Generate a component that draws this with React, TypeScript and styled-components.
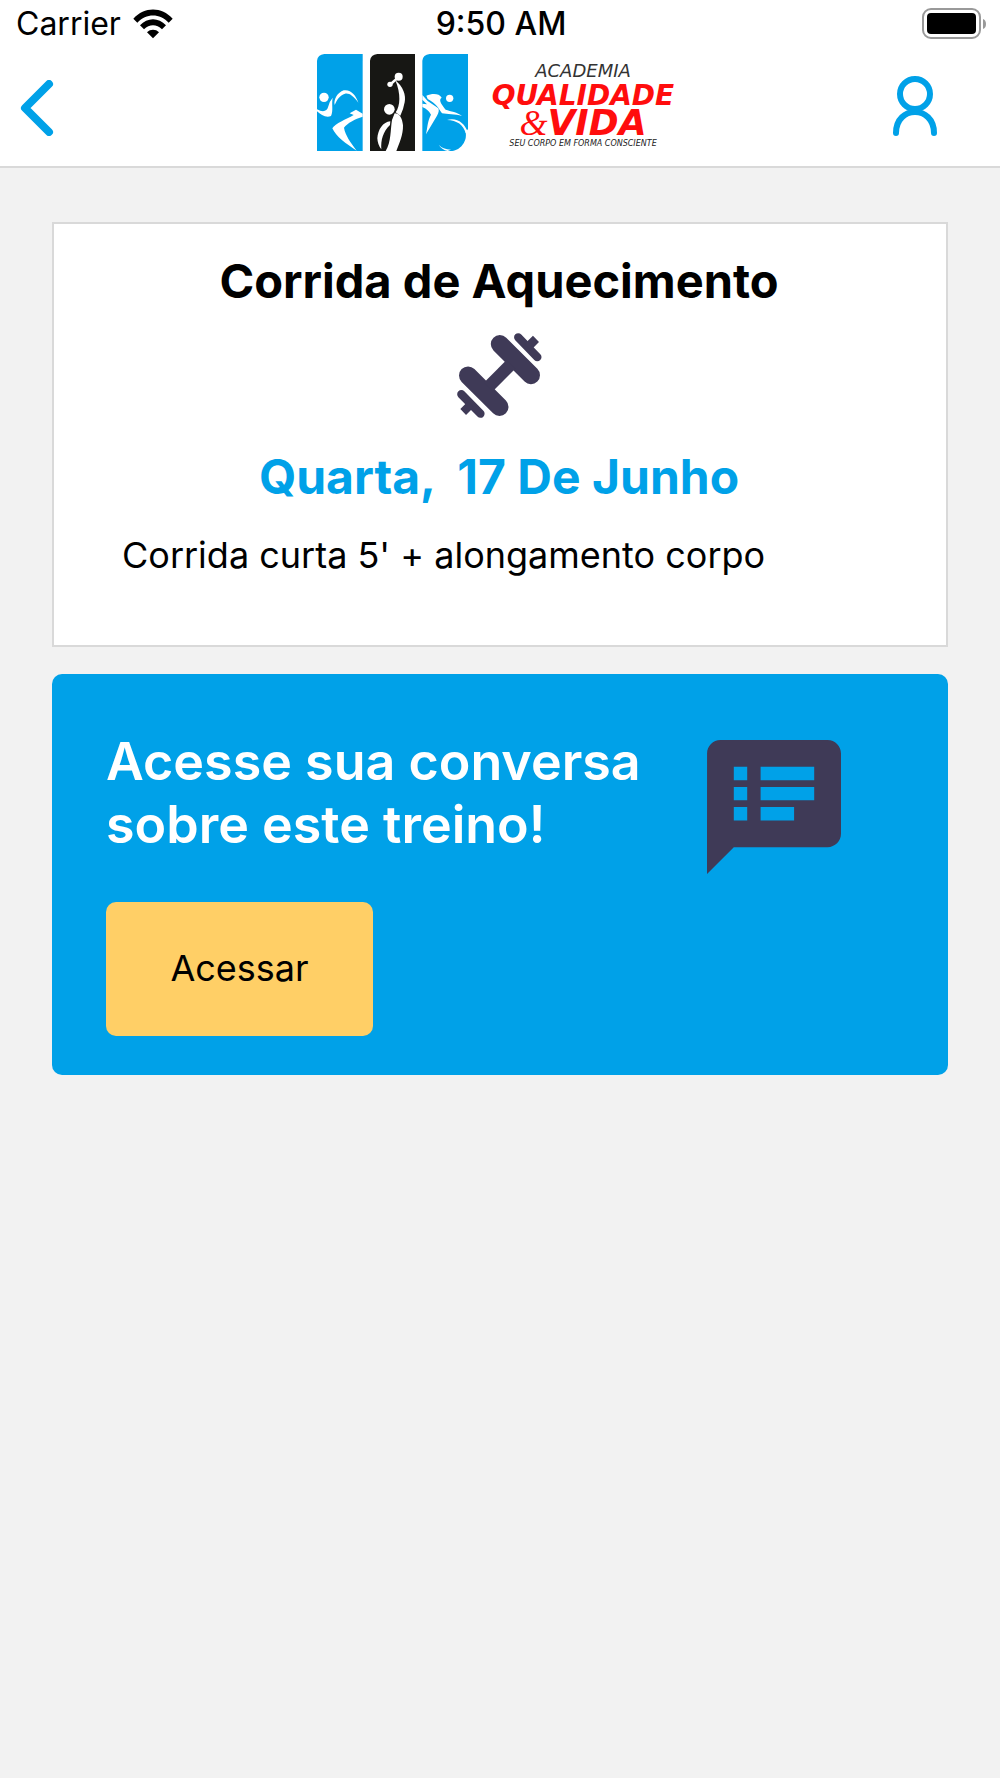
import React from 'react';
import styled, { createGlobalStyle } from 'styled-components';

const blue = '#00a1e8';
const ink = '#3f3a57';

const GlobalStyle = createGlobalStyle`
  *, *::before, *::after { box-sizing: border-box; }
  html { background: #f2f2f2; }
  body {
    margin: 0;
    color: #000;
    font-family: Inter, "Liberation Sans", sans-serif;
  }
  h1, h2, p { margin: 0; }
`;

const Top = styled.div`
  background: #fff;
  border-bottom: 2px solid #d9d9d9;
`;

const StatusBar = styled.div`
  display: grid;
  grid-template-columns: 1fr auto 1fr;
  align-items: center;
  height: 50px;
  padding: 0 14px 2px 16px;
  font-size: 32px;
  line-height: 36px;
`;

const Carrier = styled.div`
  display: flex;
  align-items: center;
  gap: 12px;
`;

const Clock = styled.time`
  font-weight: 500;
`;

const Battery = styled.svg`
  display: block;
  justify-self: end;
`;

const Header = styled.header`
  display: grid;
  grid-template-columns: 1fr auto 1fr;
  align-items: center;
  min-height: 116px;
  padding: 0 63px 0 20px;
`;

const IconButton = styled.button<{ $end?: boolean }>`
  display: block;
  justify-self: ${(p) => (p.$end ? 'end' : 'start')};
  padding: 0;
  border: 0;
  background: none;
  cursor: pointer;

  svg { display: block; }
`;

const Brand = styled.div`
  display: flex;
  align-self: start;
  align-items: flex-end;
  gap: 15px;
  padding-top: 4px;
  /* The side columns are uneven, so the brand is balanced by the difference in padding. */
  margin-left: 43px;
`;

const BrandText = styled.div`
  display: flex;
  flex-direction: column;
  align-items: center;
  width: 200px;
  font-family: "DejaVu Sans", sans-serif;
  font-style: italic;
  white-space: nowrap;
`;

const BrandOver = styled.span`
  color: #333;
  font-size: 18px;
  line-height: 22px;
`;

const BrandName = styled.span<{ $size: number }>`
  color: #ff0d0d;
  font-size: ${(p) => p.$size}px;
  font-weight: 700;
  line-height: 27px;
`;

const Ampersand = styled.span`
  font-family: "Liberation Serif", serif;
  font-weight: 400;
`;

const BrandTagline = styled.span`
  color: #222;
  font-size: 8px;
  line-height: 14px;
`;

const Main = styled.main`
  display: flex;
  flex-direction: column;
  gap: 27px;
  padding: 54px 52px;
`;

const WorkoutCard = styled.article`
  display: flex;
  flex-direction: column;
  align-items: center;
  padding: 28px 70px 68px 68px;
  border: 2px solid #d9d9d9;
  background: #fff;
`;

const CardTitle = styled.h1`
  font-size: 47px;
  font-weight: 700;
  line-height: 58px;
  text-align: center;
`;

const Dumbbell = styled.svg`
  display: block;
  margin: 23px 0 30px;
`;

const WorkoutDate = styled.p`
  color: ${blue};
  font-size: 48px;
  font-weight: 700;
  line-height: 58px;
  white-space: pre-wrap;
`;

const Description = styled.p`
  align-self: stretch;
  margin-top: 27px;
  font-size: 36px;
  line-height: 44px;
`;

const ChatCard = styled.section`
  display: flex;
  align-items: flex-start;
  gap: 24px;
  padding: 56px 107px 39px 54px;
  border-radius: 10px;
  background: ${blue};
`;

const ChatBody = styled.div`
  display: flex;
  flex: 1;
  flex-direction: column;
  align-items: flex-start;
  gap: 46px;
`;

const ChatTitle = styled.h2`
  color: #fff;
  font-size: 52px;
  font-weight: 600;
  line-height: 63px;
`;

const AccessButton = styled.button`
  min-width: 267px;
  padding: 44px 64px 46px;
  border: 0;
  border-radius: 10px;
  background: #ffcf66;
  color: #000;
  font-family: inherit;
  font-size: 36px;
  line-height: 44px;
  cursor: pointer;
`;

const ChatIcon = styled.svg`
  display: block;
  flex: none;
  margin-top: 10px;
`;

function WifiIcon() {
  return (
    <svg width="40" height="30" viewBox="0 0 120 90" aria-hidden="true">
      <path d="M1 29C34-8 86-8 119 29L107 41C80 12 40 12 13 41Z" />
      <path d="M21 49C43 25 77 25 99 49L87 61C71 45 49 45 33 61Z" />
      <path d="M42 70C52 60 68 60 78 70L60 88Z" />
    </svg>
  );
}

function BrandMark() {
  return (
    <svg width="151" height="97" viewBox="20 27 453 291" role="img" aria-label="Academia Qualidade e Vida">
      <path fill={blue} d="M20 47Q22 29 42 27H157V318H20Z" />
      <path fill="#171714" d="M179 47Q181 29 201 27H314V318H179Z" />
      <path fill={blue} d="M336 47Q338 29 358 27H473V252L466 262A48 48 0 0 1 412 318H336Z" />
      <g fill="#fff">
        <circle cx="41" cy="157" r="14" />
        <path d="M20 193C38 203 50 200 54 184Q58 168 67 158C63 180 70 195 62 213C48 220 32 210 20 199Z" />
        <path d="M73 180C69 164 82 142 100 136C121 132 137 151 144 173C130 153 116 143 104 146C88 151 80 164 73 180Z" />
        <path d="M118 205L137 194L157 206V215C134 222 111 234 101 248C105 272 121 292 139 317C107 296 77 275 66 250C75 234 107 224 130 210Z" />
        <circle cx="265" cy="95" r="12" />
        <circle cx="239" cy="118" r="8" />
        <path d="M239 114L262 94L266 100L243 121Z" />
        <path d="M255 106C278 124 288 151 283 172Q279 195 270 212L256 202C270 184 272 146 255 106Z" />
        <circle cx="237" cy="193" r="16" />
        <path d="M253 205C267 205 276 219 278 241C279 270 266 297 258 318H226C243 291 240 254 245 225Z" />
        <path d="M240 229C218 231 203 253 201 280Q202 300 213 313C211 285 218 260 239 240Z" />
        <circle cx="418" cy="160" r="11" />
        <path d="M348 152C365 145 386 144 394 158C382 164 397 183 406 194C420 199 442 201 455 213C435 207 410 208 395 205C385 190 378 176 352 162Z" />
        <path d="M336 150L352 168L384 190Q388 199 380 212L347 268C352 245 352 226 362 209Q356 195 336 186V176L350 178L336 164Z" />
        <path d="M410 225C440 216 465 235 474 266L466 264C460 240 440 226 410 225Z" />
        <path d="M385 299Q397 313 422 314L412 318Q394 314 385 299Z" />
      </g>
    </svg>
  );
}

export default function App() {
  return (
    <>
      <GlobalStyle />
      <Top>
        <StatusBar>
          <Carrier>
            Carrier
            <WifiIcon />
          </Carrier>
          <Clock>9:50 AM</Clock>
          <Battery width="64" height="32" viewBox="0 0 64 32" aria-hidden="true">
            <rect x="1" y="1" width="57" height="29" rx="8" fill="#fff" stroke="#999" strokeWidth="2" />
            <rect x="5" y="5" width="49" height="21" rx="4" />
            <path fill="#999" d="M61 11Q64 12 64 16T61 21Z" />
          </Battery>
        </StatusBar>
        <Header>
          <IconButton type="button" aria-label="Voltar">
            <svg width="34" height="56" viewBox="0 0 34 56" fill="none" stroke={blue} strokeWidth="8" strokeLinecap="round" strokeLinejoin="round">
              <path d="M29 4L5 28L29 52" />
            </svg>
          </IconButton>
          <Brand>
            <BrandMark />
            <BrandText>
              <BrandOver>ACADEMIA</BrandOver>
              <BrandName $size={28}>QUALIDADE</BrandName>
              <BrandName $size={36}>
                <Ampersand>&amp;</Ampersand>VIDA
              </BrandName>
              <BrandTagline>SEU CORPO EM FORMA CONSCIENTE</BrandTagline>
            </BrandText>
          </Brand>
          <IconButton type="button" $end aria-label="Perfil">
            <svg width="44" height="64" viewBox="0 0 44 64" fill="none" stroke={blue} strokeWidth="6" strokeLinecap="round">
              <circle cx="22" cy="18" r="15" />
              <path d="M3 57C3 29 41 29 41 57" />
            </svg>
          </IconButton>
        </Header>
      </Top>
      <Main>
        <WorkoutCard>
          <CardTitle>Corrida de Aquecimento</CardTitle>
          <Dumbbell width="85" height="85" viewBox="79 39 254 254" fill="none" stroke={ink} strokeLinecap="round" aria-hidden="true">
            <path strokeWidth="54" d="M207 72L300 165M112 166L206 260" />
            <path strokeWidth="37" strokeLinecap="butt" d="M240 133L173 200" />
            <path strokeWidth="25" d="M262 52L319 111M92 222L149 280" />
            <path fill={ink} stroke="none" d="M306 47L324 66L299 91L281 72ZM89 266L106 284L129 261L112 243Z" />
          </Dumbbell>
          <WorkoutDate>{'Quarta,  17 De Junho'}</WorkoutDate>
          <Description>Corrida curta 5' + alongamento corpo</Description>
        </WorkoutCard>
        <ChatCard>
          <ChatBody>
            <ChatTitle>Acesse sua conversa sobre este treino!</ChatTitle>
            <AccessButton type="button">Acessar</AccessButton>
          </ChatBody>
          <ChatIcon width="134" height="134" viewBox="2 2 20 20" fill={ink} aria-hidden="true">
            <path d="M20 2H4c-1.100 0-1.990.9-1.990 2L2 22l4-4h14c1.100 0 2-.9 2-2V4c0-1.100-.9-2-2-2zM8 14H6v-2h2v2zm0-3H6V9h2v2zm0-3H6V6h2v2zm7 6h-5v-2h5v2zm3-3h-8V9h8v2zm0-3h-8V6h8v2z" />
          </ChatIcon>
        </ChatCard>
      </Main>
    </>
  );
}
